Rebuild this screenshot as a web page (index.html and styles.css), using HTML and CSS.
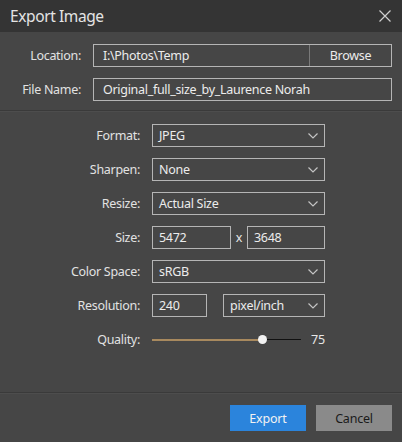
FILE: index.html
```html
<!DOCTYPE html>
<html>
<head>
<meta charset="utf-8">
<link rel="stylesheet" href="styles.css">
</head>
<body>
<div class="dialog">
  <div class="titlebar">
    <span class="title">Export Image</span>
    <svg class="close" width="12" height="12" viewBox="0 0 12 12"><path d="M0.5 0.5 L11.5 11.5 M11.5 0.5 L0.5 11.5" stroke="#cfcfcf" stroke-width="1.2" fill="none"/></svg>
  </div>
  <div class="top">
    <div class="label">Location:</div>
    <div class="box loc"><span class="loc-text">I:\Photos\Temp</span><span class="browse">Browse</span></div>
    <div class="label">File Name:</div>
    <div class="box"><span>Original_full_size_by_Laurence Norah</span></div>
  </div>
  <div class="sep"></div>
  <div class="main">
    <div class="label">Format:</div>
    <div class="box select"><span>JPEG</span><svg class="chev" width="10" height="6" viewBox="0 0 10 6"><path d="M0.5 0.5 L5 5 L9.5 0.5" stroke="#c4c4c4" stroke-width="1.2" fill="none"/></svg></div>
    <div class="label">Sharpen:</div>
    <div class="box select"><span>None</span><svg class="chev" width="10" height="6" viewBox="0 0 10 6"><path d="M0.5 0.5 L5 5 L9.5 0.5" stroke="#c4c4c4" stroke-width="1.2" fill="none"/></svg></div>
    <div class="label">Resize:</div>
    <div class="box select"><span>Actual Size</span><svg class="chev" width="10" height="6" viewBox="0 0 10 6"><path d="M0.5 0.5 L5 5 L9.5 0.5" stroke="#c4c4c4" stroke-width="1.2" fill="none"/></svg></div>
    <div class="label">Size:</div>
    <div class="size-row">
      <div class="box w78"><span>5472</span></div>
      <span class="x">x</span>
      <div class="box grow"><span>3648</span></div>
    </div>
    <div class="label">Color Space:</div>
    <div class="box select"><span>sRGB</span><svg class="chev" width="10" height="6" viewBox="0 0 10 6"><path d="M0.5 0.5 L5 5 L9.5 0.5" stroke="#c4c4c4" stroke-width="1.2" fill="none"/></svg></div>
    <div class="label">Resolution:</div>
    <div class="res-row">
      <div class="box w55"><span>240</span></div>
      <div class="box select grow"><span>pixel/inch</span><svg class="chev" width="10" height="6" viewBox="0 0 10 6"><path d="M0.5 0.5 L5 5 L9.5 0.5" stroke="#c4c4c4" stroke-width="1.2" fill="none"/></svg></div>
    </div>
    <div class="label">Quality:</div>
    <div class="quality">
      <div class="slider">
        <div class="fill"></div>
        <div class="rest"></div>
        <div class="thumb"></div>
      </div>
      <span class="qval">75</span>
    </div>
  </div>
  <div class="sep"></div>
  <div class="footer">
    <button class="btn export">Export</button>
    <button class="btn cancel">Cancel</button>
  </div>
</div>
</body>
</html>
```
FILE: styles.css
```css
html, body {
  margin: 0;
  padding: 0;
  background: #464646;
}
body {
  width: 402px;
  height: 442px;
  overflow: hidden;
  font-family: "Noto Sans", "Open Sans", sans-serif;
  color: #e6e6e6;
}
.dialog {
  width: 402px;
  height: 442px;
  display: flex;
  flex-direction: column;
  background: #464646;
}
.titlebar {
  height: 32px;
  flex: none;
  background: #343434;
  display: flex;
  align-items: center;
  justify-content: space-between;
  padding: 0 10px 0 10px;
}
.title {
  font-size: 15.5px;
  color: #e4e4e4;
  letter-spacing: -0.4px;
}
.close {
  display: block;
  margin-right: 1px;
}
.top {
  display: grid;
  grid-template-columns: 81px 299px;
  column-gap: 12px;
  row-gap: 11px;
  padding: 12px 0 9px 0;
}
.main {
  display: grid;
  grid-template-columns: 140px 173px;
  column-gap: 12px;
  row-gap: 11px;
  padding: 12px 0 0 0;
  flex: 1;
  align-content: start;
}
.label {
  font-size: 12.5px;
  letter-spacing: -0.3px;
  text-align: right;
  height: 23px;
  line-height: 23px;
  color: #e2e2e2;
}
.box {
  box-sizing: border-box;
  height: 23px;
  border: 1px solid #b5b5b5;
  display: flex;
  align-items: center;
  font-size: 12.5px;
  letter-spacing: -0.3px;
  padding-left: 6px;
  color: #ececec;
}
.top .box {
  padding-left: 9px;
}
.loc {
  padding-right: 0;
}
.loc-text {
  flex: 1;
}
.browse {
  width: 81px;
  height: 100%;
  border-left: 1px solid #7a7a7a;
  display: flex;
  align-items: center;
  justify-content: center;
}
.select {
  justify-content: space-between;
  padding-right: 6px;
}
.chev {
  display: block;
}
.size-row, .res-row {
  display: flex;
  align-items: center;
}
.w78 { width: 79px; flex: none; }
.w55 { width: 55px; flex: none; }
.grow { flex: 1; }
.x {
  width: 16px;
  text-align: center;
  font-size: 12.5px;
}
.res-row { gap: 16px; }
.quality {
  display: flex;
  align-items: center;
  height: 23px;
}
.slider {
  position: relative;
  width: 149px;
  height: 9px;
  display: flex;
  align-items: center;
}
.fill {
  width: 111px;
  height: 2px;
  background: #a8895e;
}
.rest {
  flex: 1;
  height: 1px;
  background: #111;
}
.thumb {
  position: absolute;
  left: 106px;
  top: 0;
  width: 9px;
  height: 9px;
  border-radius: 50%;
  background: #f2f2f2;
}
.qval {
  margin-left: auto;
  font-size: 12.5px;
  letter-spacing: -0.2px;
}
.sep {
  height: 1px;
  background: #3a3a3a;
  border-bottom: 1px solid #4d4d4d;
  flex: none;
}
.footer {
  height: 48px;
  flex: none;
  display: flex;
  justify-content: flex-end;
  align-items: flex-start;
  gap: 10px;
  padding: 11px 10px 0 0;
  box-sizing: border-box;
}
.btn {
  width: 76px;
  height: 26px;
  border: none;
  font-family: "Noto Sans", "Open Sans", sans-serif;
  font-size: 12.5px;
  letter-spacing: -0.2px;
  padding: 0;
}
.export {
  background: #2b84dc;
  color: #f2f2f2;
}
.cancel {
  background: #8a8a8a;
  color: #1a1a1a;
}
```
